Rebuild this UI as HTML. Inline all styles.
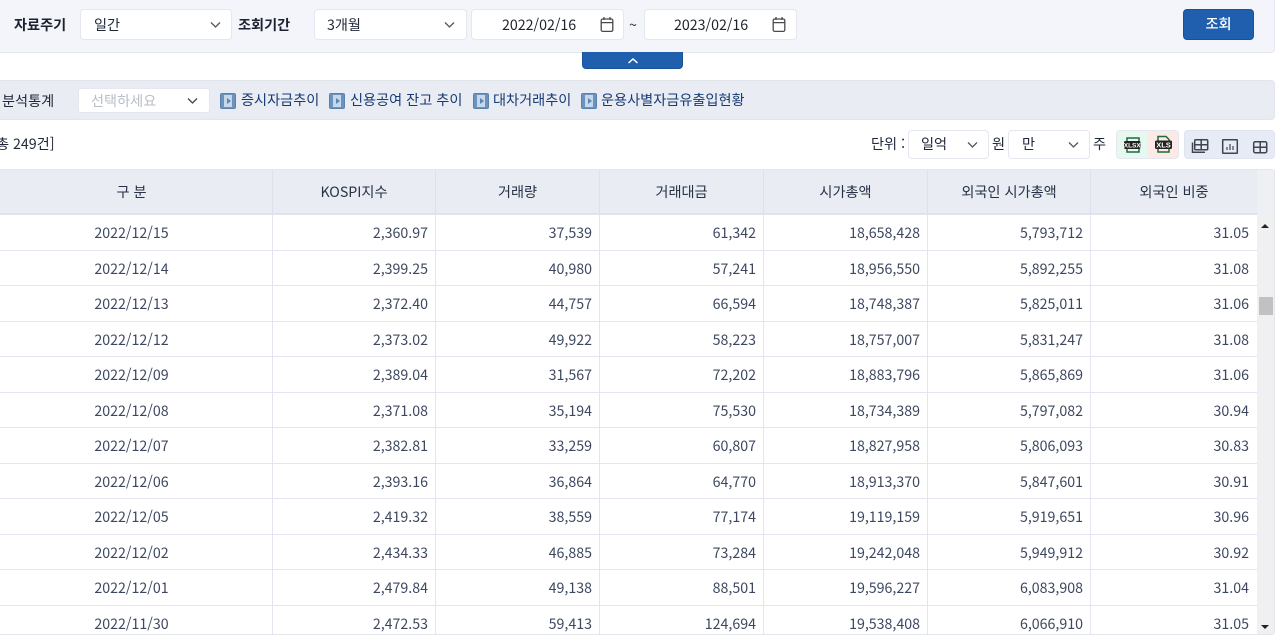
<!DOCTYPE html>
<html lang="ko"><head><meta charset="utf-8"><title>자료주기</title>
<style>
*{box-sizing:border-box}
html,body{margin:0;padding:0;width:1280px;height:640px;overflow:hidden;background:#fff}
body{position:relative;font-family:"Noto Sans CJK KR","Liberation Sans",sans-serif;font-size:14.2px;color:#20283a}
.a{position:absolute}
.t{position:absolute;white-space:nowrap;line-height:20px}
.b{font-weight:700;color:#1c2230}
.box{position:absolute;background:#fff;border:1px solid #e4e7f0;border-radius:4px}
.ch{position:absolute}
.lnk{position:absolute;white-space:nowrap;line-height:20px;color:#173a75}
.ic{position:absolute;top:93px;width:16px;height:16px;border-radius:2px;background:#6d92bd;border:1px solid #5a82ae}
.ic:after{content:"";position:absolute;left:3px;top:1px;width:8px;height:12px;background:#c6d8ea}
.ic:before{content:"";position:absolute;z-index:1;left:6px;top:4px;border-left:4px solid #5a86b6;border-top:3.5px solid transparent;border-bottom:3.5px solid transparent}
#tb{position:absolute;left:0;top:169px;width:1275px;height:466px;overflow:hidden;border:1px solid #e2e5ec;border-left:0;border-radius:0 3px 3px 0}
#hd{position:absolute;left:0;top:0;width:1257px;height:45px;background:#e9ecf2;border-bottom:2px solid #dfe3ec}
.h{position:absolute;top:0;height:43px;line-height:45px;text-align:center;color:#273246;border-right:1px solid #dde1ea}
#rows{position:absolute;left:0;top:45.3px;width:1257px}
.r{position:relative;height:35.5px;border-bottom:1px solid #e4e4f2;color:#3d4860}
.c{position:absolute;top:0;height:35px;line-height:37px;text-align:right;padding-right:7px;border-right:1px solid #e4e4f2}
.c1{left:0;width:273px;text-align:center;padding:0;text-indent:-9px}
.c2{left:273px;width:163px}
.c3{left:436px;width:164px}
.c4{left:600px;width:164px}
.c5{left:764px;width:164px}
.c6{left:928px;width:163px}
.c7{left:1091px;width:166px;border-right:0;padding-right:8px}
#sb{position:absolute;left:1257px;top:0;width:17px;height:466px;background:#f0f0f0}
</style></head><body>

<div class="a" style="left:-4px;top:-4px;width:1279px;height:57px;background:#f3f5fa;border:1px solid #e4e7f0;border-radius:4px"></div>
<div class="t b" style="left:14px;top:15px">자료주기</div>
<div class="box" style="left:80px;top:9px;width:152px;height:31px"></div>
<div class="t" style="left:94px;top:15px">일간</div>
<svg class="ch" style="left:209px;top:21px" width="13" height="8" fill="none" stroke="#555" stroke-width="1.3"><path d="M2 1.5l4.5 4.5 4.500-4.500"/></svg>
<div class="t b" style="left:238px;top:15px">조회기간</div>
<div class="box" style="left:314px;top:9px;width:153px;height:31px"></div>
<div class="t" style="left:327px;top:15px">3개월</div>
<svg class="ch" style="left:443px;top:21px" width="13" height="8" fill="none" stroke="#555" stroke-width="1.3"><path d="M2 1.5l4.5 4.5 4.500-4.500"/></svg>
<div class="box" style="left:471px;top:9px;width:153px;height:31px"></div>
<div class="t" style="left:502px;top:15px;color:#20242e">2022/02/16</div>
<svg class="a" style="left:600px;top:16px" width="14" height="17" fill="none" stroke="#4a4a4a" stroke-width="1.3"><rect x="1.2" y="3" width="11.6" height="12.4" rx="1.5"/><path d="M1.2 6.600h11.600M4 1v3M10 1v3"/></svg>
<div class="t" style="left:629px;top:15px;color:#333">~</div>
<div class="box" style="left:644px;top:9px;width:153px;height:31px"></div>
<div class="t" style="left:674px;top:15px;color:#20242e">2023/02/16</div>
<svg class="a" style="left:772px;top:16px" width="14" height="17" fill="none" stroke="#4a4a4a" stroke-width="1.3"><rect x="1.2" y="3" width="11.6" height="12.4" rx="1.5"/><path d="M1.2 6.600h11.600M4 1v3M10 1v3"/></svg>
<div class="a" style="left:1183px;top:9px;width:71px;height:31px;background:#1f5fae;border:1px solid #1a5298;border-radius:4px;color:#fff;text-align:center;line-height:28px;font-weight:500">조회</div>
<div class="a" style="left:582px;top:52px;width:101px;height:17px;background:#1f5fae;border:1px solid #1a5298;border-top:0;border-radius:0 0 4px 4px"></div>
<svg class="a" style="left:627px;top:57px" width="12" height="8" fill="none" stroke="#fff" stroke-width="1.5"><path d="M1.5 6l4.500-4 4.500 4"/></svg>

<div class="a" style="left:-4px;top:80px;width:1279px;height:40px;background:#e9ecf2;border:1px solid #e2e5ec;border-radius:4px"></div>
<div class="t" style="left:2px;top:91px;color:#20283a">분석통계</div>
<div class="box" style="left:78px;top:88px;width:132px;height:25px;border-radius:3px"></div>
<div class="t" style="left:91px;top:91px;color:#b9bec8">선택하세요</div>
<svg class="ch" style="left:186px;top:97px" width="13" height="8" fill="none" stroke="#444" stroke-width="1.3"><path d="M2 1.5l4.5 4.5 4.500-4.500"/></svg>
<span class="ic" style="left:220px"></span><div class="lnk" style="left:241px;top:90px">증시자금추이</div>
<span class="ic" style="left:329px"></span><div class="lnk" style="left:350px;top:90px">신용공여 잔고 추이</div>
<span class="ic" style="left:473px"></span><div class="lnk" style="left:493px;top:90px">대차거래추이</div>
<span class="ic" style="left:581px"></span><div class="lnk" style="left:601px;top:90px">운용사별자금유출입현황</div>

<div class="t" style="left:-4px;top:134px;color:#20283a">총 249건]</div>
<div class="t" style="left:871px;top:134px;color:#20283a">단위 :</div>
<div class="box" style="left:908px;top:130px;width:81px;height:29px"></div>
<div class="t" style="left:921px;top:134px">일억</div>
<svg class="ch" style="left:966px;top:141px" width="13" height="8" fill="none" stroke="#555" stroke-width="1.3"><path d="M2 1.5l4.5 4.5 4.500-4.500"/></svg>
<div class="t" style="left:992px;top:134px">원</div>
<div class="box" style="left:1008px;top:130px;width:82px;height:29px"></div>
<div class="t" style="left:1022px;top:134px">만</div>
<svg class="ch" style="left:1067px;top:141px" width="13" height="8" fill="none" stroke="#555" stroke-width="1.3"><path d="M2 1.5l4.5 4.5 4.500-4.500"/></svg>
<div class="t" style="left:1093px;top:134px">주</div>

<div class="a" style="left:1116px;top:130px;width:63px;height:29px;border:1px solid #e4e7f0;border-radius:4px;overflow:hidden;background:linear-gradient(90deg,#e5f9f1 50%,#fde9e6 50%)"></div>
<svg class="a" style="left:1122px;top:135px" width="52" height="19"><g fill="none" stroke="#1d6b3a" stroke-width="1.5"><path d="M5 6V3h12v3M5 14v3h12v-3"/><path d="M36 6V1.500h8l3 3V6M36 14v3h11v-3"/></g><rect x="2" y="6" width="16.500" height="8" rx="1.500" fill="#222"/><rect x="33" y="5.500" width="17" height="8.500" rx="1.500" fill="#222"/><text x="10.250" y="12.300" font-size="6.500" font-weight="700" text-anchor="middle" fill="#fff" font-family="Liberation Sans">XLSX</text><text x="41.500" y="12.300" font-size="7.500" font-weight="700" text-anchor="middle" fill="#fff" font-family="Liberation Sans">XLS</text></svg>

<div class="a" style="left:1184px;top:130px;width:91px;height:29px;background:#e7ebf5;border:1px solid #e0e4ef;border-radius:4px"></div>
<svg class="a" style="left:1190px;top:136px" width="80" height="20" fill="none" stroke="#3d4552" stroke-width="1.500"><rect x="4.700" y="3.700" width="13" height="10" rx="1"/><path d="M4.700 8.700h13M11.200 3.700v10"/><path d="M2.500 6.500v9.800h12.500"/><rect x="32.700" y="3.700" width="14.600" height="13.600" rx=".5"/><path d="M37 14v-3M40 14V8M43 14v-4" stroke-width="1.200"/><rect x="63.700" y="5.700" width="13" height="11" rx="1.500"/><path d="M63.700 11.200h13M70.200 5.700v11"/></svg>

<div id="tb">
<div id="hd">
<div class="h" style="left:0;width:273px;text-indent:-9px">구 분</div>
<div class="h" style="left:273px;width:163px">KOSPI지수</div>
<div class="h" style="left:436px;width:164px">거래량</div>
<div class="h" style="left:600px;width:164px">거래대금</div>
<div class="h" style="left:764px;width:164px">시가총액</div>
<div class="h" style="left:928px;width:163px">외국인 시가총액</div>
<div class="h" style="left:1091px;width:166px;border-right:0">외국인 비중</div>
</div>
<div id="rows">
<div class="r"><div class="c c1">2022/12/15</div><div class="c c2">2,360.97</div><div class="c c3">37,539</div><div class="c c4">61,342</div><div class="c c5">18,658,428</div><div class="c c6">5,793,712</div><div class="c c7">31.05</div></div>
<div class="r"><div class="c c1">2022/12/14</div><div class="c c2">2,399.25</div><div class="c c3">40,980</div><div class="c c4">57,241</div><div class="c c5">18,956,550</div><div class="c c6">5,892,255</div><div class="c c7">31.08</div></div>
<div class="r"><div class="c c1">2022/12/13</div><div class="c c2">2,372.40</div><div class="c c3">44,757</div><div class="c c4">66,594</div><div class="c c5">18,748,387</div><div class="c c6">5,825,011</div><div class="c c7">31.06</div></div>
<div class="r"><div class="c c1">2022/12/12</div><div class="c c2">2,373.02</div><div class="c c3">49,922</div><div class="c c4">58,223</div><div class="c c5">18,757,007</div><div class="c c6">5,831,247</div><div class="c c7">31.08</div></div>
<div class="r"><div class="c c1">2022/12/09</div><div class="c c2">2,389.04</div><div class="c c3">31,567</div><div class="c c4">72,202</div><div class="c c5">18,883,796</div><div class="c c6">5,865,869</div><div class="c c7">31.06</div></div>
<div class="r"><div class="c c1">2022/12/08</div><div class="c c2">2,371.08</div><div class="c c3">35,194</div><div class="c c4">75,530</div><div class="c c5">18,734,389</div><div class="c c6">5,797,082</div><div class="c c7">30.94</div></div>
<div class="r"><div class="c c1">2022/12/07</div><div class="c c2">2,382.81</div><div class="c c3">33,259</div><div class="c c4">60,807</div><div class="c c5">18,827,958</div><div class="c c6">5,806,093</div><div class="c c7">30.83</div></div>
<div class="r"><div class="c c1">2022/12/06</div><div class="c c2">2,393.16</div><div class="c c3">36,864</div><div class="c c4">64,770</div><div class="c c5">18,913,370</div><div class="c c6">5,847,601</div><div class="c c7">30.91</div></div>
<div class="r"><div class="c c1">2022/12/05</div><div class="c c2">2,419.32</div><div class="c c3">38,559</div><div class="c c4">77,174</div><div class="c c5">19,119,159</div><div class="c c6">5,919,651</div><div class="c c7">30.96</div></div>
<div class="r"><div class="c c1">2022/12/02</div><div class="c c2">2,434.33</div><div class="c c3">46,885</div><div class="c c4">73,284</div><div class="c c5">19,242,048</div><div class="c c6">5,949,912</div><div class="c c7">30.92</div></div>
<div class="r"><div class="c c1">2022/12/01</div><div class="c c2">2,479.84</div><div class="c c3">49,138</div><div class="c c4">88,501</div><div class="c c5">19,596,227</div><div class="c c6">6,083,908</div><div class="c c7">31.04</div></div>
<div class="r" style="border-bottom:0"><div class="c c1">2022/11/30</div><div class="c c2">2,472.53</div><div class="c c3">59,413</div><div class="c c4">124,694</div><div class="c c5">19,538,408</div><div class="c c6">6,066,910</div><div class="c c7">31.05</div></div>
</div>
<div id="sb">
<div class="a" style="left:0;top:0;width:17px;height:45px;background:#eef0f3"></div>
<div class="a" style="left:4px;top:54px;border-bottom:4px solid #222;border-left:4px solid transparent;border-right:4px solid transparent"></div>
<div class="a" style="left:2px;top:127px;width:14px;height:18px;background:#c1c1c1"></div>
<div class="a" style="left:4px;top:455px;border-top:4px solid #222;border-left:4px solid transparent;border-right:4px solid transparent"></div>
</div>
</div>
</body></html>
